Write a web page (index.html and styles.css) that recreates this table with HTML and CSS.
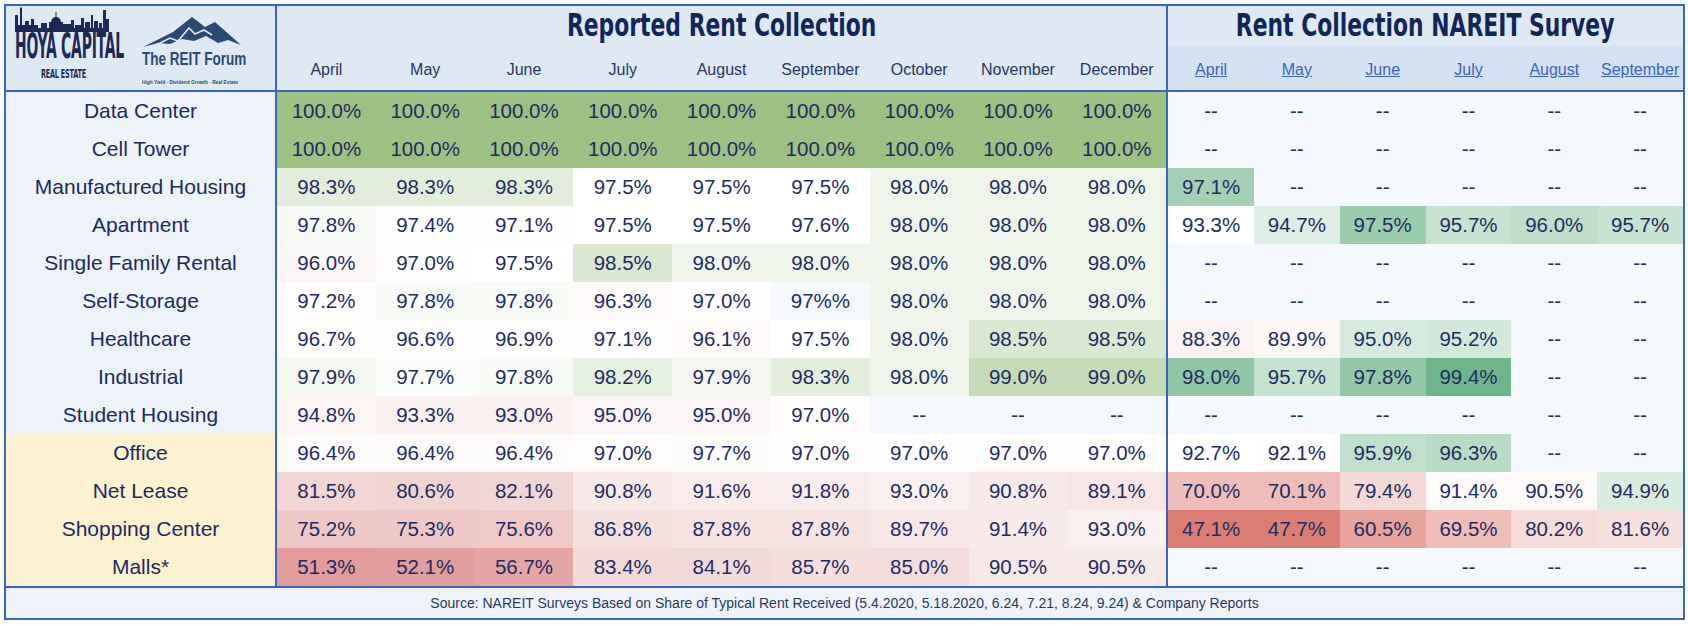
FILE: index.html
```html
<!DOCTYPE html>
<html lang="en">
<head>
<meta charset="utf-8">
<title>Rent Collection</title>
<link rel="stylesheet" href="styles.css">
</head>
<body>
<div class="sheet">
  <div class="grid head">
    <div class="logos">
      <div class="hoya">
        <svg class="skyline" width="94" height="25" viewBox="0 0 94 25">
          <g fill="#1d2955">
            <rect x="0" y="8" width="3" height="17"/>
            <rect x="5" y="1" width="2" height="24"/>
            <rect x="5.5" y="0" width="1" height="2"/>
            <rect x="3" y="18" width="20" height="7"/>
            <rect x="10" y="14" width="4" height="11"/>
            <rect x="16" y="12" width="3" height="13"/>
            <rect x="26" y="16" width="6" height="9"/>
            <rect x="34" y="15" width="14" height="10"/>
            <ellipse cx="41" cy="15" rx="5" ry="5"/>
            <rect x="40.5" y="5" width="1" height="6"/>
            <rect x="48" y="17" width="8" height="8"/>
            <rect x="56" y="13" width="3" height="12"/>
            <rect x="60" y="18" width="6" height="7"/>
            <rect x="66" y="11" width="3" height="14"/>
            <rect x="70" y="15" width="5" height="10"/>
            <rect x="76" y="8" width="2" height="17"/>
            <rect x="79" y="14" width="4" height="11"/>
            <rect x="84" y="16" width="3" height="9"/>
            <rect x="88" y="3" width="3" height="22"/>
            <rect x="91" y="12" width="3" height="13"/>
            <rect x="0" y="21" width="94" height="4"/>
          </g>
        </svg>
        <div class="hoya-name"><span>HOYA CAPITAL</span></div>
        <div class="hoya-sub"><span>REAL ESTATE</span></div>
      </div>
      <div class="forum">
        <svg class="mtn" width="100" height="32" viewBox="0 0 100 32">
          <polygon fill="#2b4a73" points="1,31 31,16 50,1 63,11 73,6 99,29 86,24 76,27 64,20 52,25 40,23 28,28 16,27"/>
          <polyline fill="none" stroke="#dfe9f4" stroke-width="1.6" points="14,29 28,22 36,25 47,12 53,18 62,14 70,19"/>
        </svg>
        <div class="forum-name"><span>The REIT Forum</span></div>
        <div class="forum-tag"><span>High Yield · Dividend Growth · Real Estate</span></div>
      </div>
    </div>
    <div class="title t-rep"><span>Reported Rent Collection</span></div>
    <div class="title t-nar"><span>Rent Collection NAREIT Survey</span></div>
    <div class="mon">April</div>
    <div class="mon">May</div>
    <div class="mon">June</div>
    <div class="mon">July</div>
    <div class="mon">August</div>
    <div class="mon">September</div>
    <div class="mon">October</div>
    <div class="mon">November</div>
    <div class="mon sep">December</div>
    <div class="mon nar"><a href="#">April</a></div>
    <div class="mon nar"><a href="#">May</a></div>
    <div class="mon nar"><a href="#">June</a></div>
    <div class="mon nar"><a href="#">July</a></div>
    <div class="mon nar"><a href="#">August</a></div>
    <div class="mon nar"><a href="#">September</a></div>
  </div>

  <div class="body">
    <div class="grid row">
      <div class="lab">Data Center</div>
      <div style="background:#9dc183">100.0%</div><div style="background:#9dc183">100.0%</div><div style="background:#9dc183">100.0%</div><div style="background:#9dc183">100.0%</div><div style="background:#9dc183">100.0%</div><div style="background:#9dc183">100.0%</div><div style="background:#9dc183">100.0%</div><div style="background:#9dc183">100.0%</div><div style="background:#9dc183">100.0%</div>
      <div>--</div><div>--</div><div>--</div><div>--</div><div>--</div><div>--</div>
    </div>
    <div class="grid row">
      <div class="lab">Cell Tower</div>
      <div style="background:#9dc183">100.0%</div><div style="background:#9dc183">100.0%</div><div style="background:#9dc183">100.0%</div><div style="background:#9dc183">100.0%</div><div style="background:#9dc183">100.0%</div><div style="background:#9dc183">100.0%</div><div style="background:#9dc183">100.0%</div><div style="background:#9dc183">100.0%</div><div style="background:#9dc183">100.0%</div>
      <div>--</div><div>--</div><div>--</div><div>--</div><div>--</div><div>--</div>
    </div>
    <div class="grid row">
      <div class="lab">Manufactured Housing</div>
      <div style="background:#e2eddb">98.3%</div><div style="background:#e2eddb">98.3%</div><div style="background:#e2eddb">98.3%</div><div style="background:#ffffff">97.5%</div><div style="background:#ffffff">97.5%</div><div style="background:#ffffff">97.5%</div><div style="background:#eff5ea">98.0%</div><div style="background:#eff5ea">98.0%</div><div style="background:#eff5ea">98.0%</div>
      <div style="background:#a4d1b6">97.1%</div><div>--</div><div>--</div><div>--</div><div>--</div><div>--</div>
    </div>
    <div class="grid row">
      <div class="lab">Apartment</div>
      <div style="background:#f7faf5">97.8%</div><div style="background:#fffefe">97.4%</div><div style="background:#fefcfc">97.1%</div><div style="background:#ffffff">97.5%</div><div style="background:#ffffff">97.5%</div><div style="background:#ffffff">97.6%</div><div style="background:#eff5ea">98.0%</div><div style="background:#eff5ea">98.0%</div><div style="background:#eff5ea">98.0%</div>
      <div style="background:#ffffff">93.3%</div><div style="background:#ddeee4">94.7%</div><div style="background:#9accae">97.5%</div><div style="background:#c6e2d1">95.7%</div><div style="background:#bedecb">96.0%</div><div style="background:#c6e2d1">95.7%</div>
    </div>
    <div class="grid row">
      <div class="lab">Single Family Rental</div>
      <div style="background:#fdf8f8">96.0%</div><div style="background:#fefcfc">97.0%</div><div style="background:#ffffff">97.5%</div><div style="background:#dae8d1">98.5%</div><div style="background:#eff5ea">98.0%</div><div style="background:#eff5ea">98.0%</div><div style="background:#eff5ea">98.0%</div><div style="background:#eff5ea">98.0%</div><div style="background:#eff5ea">98.0%</div>
      <div>--</div><div>--</div><div>--</div><div>--</div><div>--</div><div>--</div>
    </div>
    <div class="grid row">
      <div class="lab">Self-Storage</div>
      <div style="background:#fffdfd">97.2%</div><div style="background:#f7faf5">97.8%</div><div style="background:#f7faf5">97.8%</div><div style="background:#fdf9f9">96.3%</div><div style="background:#fefcfc">97.0%</div><div>97%%</div><div style="background:#eff5ea">98.0%</div><div style="background:#eff5ea">98.0%</div><div style="background:#eff5ea">98.0%</div>
      <div>--</div><div>--</div><div>--</div><div>--</div><div>--</div><div>--</div>
    </div>
    <div class="grid row">
      <div class="lab">Healthcare</div>
      <div style="background:#fefbfb">96.7%</div><div style="background:#fefbfb">96.6%</div><div style="background:#fefcfc">96.9%</div><div style="background:#fefcfc">97.1%</div><div style="background:#fdf9f9">96.1%</div><div style="background:#ffffff">97.5%</div><div style="background:#eff5ea">98.0%</div><div style="background:#dae8d1">98.5%</div><div style="background:#dae8d1">98.5%</div>
      <div style="background:#fcf2f1">88.3%</div><div style="background:#fdf7f6">89.9%</div><div style="background:#d6eade">95.0%</div><div style="background:#d2e8db">95.2%</div><div>--</div><div>--</div>
    </div>
    <div class="grid row">
      <div class="lab">Industrial</div>
      <div style="background:#f3f7f0">97.9%</div><div style="background:#fbfcfa">97.7%</div><div style="background:#f7faf5">97.8%</div><div style="background:#e6f0e0">98.2%</div><div style="background:#f3f7f0">97.9%</div><div style="background:#e2eddb">98.3%</div><div style="background:#eff5ea">98.0%</div><div style="background:#c6dbb7">99.0%</div><div style="background:#c6dbb7">99.0%</div>
      <div style="background:#8fc6a5">98.0%</div><div style="background:#c6e2d1">95.7%</div><div style="background:#93c8a9">97.8%</div><div style="background:#6db58a">99.4%</div><div>--</div><div>--</div>
    </div>
    <div class="grid row">
      <div class="lab">Student Housing</div>
      <div style="background:#fcf5f4">94.8%</div><div style="background:#faf0f0">93.3%</div><div style="background:#faf0ef">93.0%</div><div style="background:#fcf5f5">95.0%</div><div style="background:#fcf5f5">95.0%</div><div style="background:#fefcfc">97.0%</div><div>--</div><div>--</div><div>--</div>
      <div>--</div><div>--</div><div>--</div><div>--</div><div>--</div><div>--</div>
    </div>
    <div class="grid row">
      <div class="lab yel">Office</div>
      <div style="background:#fdfafa">96.4%</div><div style="background:#fdfafa">96.4%</div><div style="background:#fdfafa">96.4%</div><div style="background:#fefcfc">97.0%</div><div style="background:#fbfcfa">97.7%</div><div style="background:#fefcfc">97.0%</div><div style="background:#fefcfc">97.0%</div><div style="background:#fefcfc">97.0%</div><div style="background:#fefcfc">97.0%</div>
      <div style="background:#ffffff">92.7%</div><div style="background:#fffdfd">92.1%</div><div style="background:#c1dfcd">95.9%</div><div style="background:#b7dbc5">96.3%</div><div>--</div><div>--</div>
    </div>
    <div class="grid row">
      <div class="lab yel">Net Lease</div>
      <div style="background:#f2d5d4">81.5%</div><div style="background:#f1d3d2">80.6%</div><div style="background:#f2d6d5">82.1%</div><div style="background:#f8eae9">90.8%</div><div style="background:#f9eceb">91.6%</div><div style="background:#f9ecec">91.8%</div><div style="background:#faf0ef">93.0%</div><div style="background:#f8eae9">90.8%</div><div style="background:#f7e6e5">89.1%</div>
      <div style="background:#edbeb9">70.0%</div><div style="background:#edbeb9">70.1%</div><div style="background:#f5d9d6">79.4%</div><div style="background:#fefbfb">91.4%</div><div style="background:#fdf9f8">90.5%</div><div style="background:#d9ece0">94.9%</div>
    </div>
    <div class="grid row">
      <div class="lab yel">Shopping Center</div>
      <div style="background:#eec8c7">75.2%</div><div style="background:#eec8c7">75.3%</div><div style="background:#eec9c8">75.6%</div><div style="background:#f5e0e0">86.8%</div><div style="background:#f6e3e2">87.8%</div><div style="background:#f6e3e2">87.8%</div><div style="background:#f7e7e7">89.7%</div><div style="background:#f9ebeb">91.4%</div><div style="background:#faf0ef">93.0%</div>
      <div style="background:#db7d73">47.1%</div><div style="background:#db7f75">47.7%</div><div style="background:#e6a39c">60.5%</div><div style="background:#edbdb8">69.5%</div><div style="background:#f5dbd9">80.2%</div><div style="background:#f6dfdd">81.6%</div>
    </div>
    <div class="grid row">
      <div class="lab yel">Malls*</div>
      <div style="background:#e09d9b">51.3%</div><div style="background:#e09e9c">52.1%</div><div style="background:#e3a6a4">56.7%</div><div style="background:#f3d9d8">83.4%</div><div style="background:#f3dada">84.1%</div><div style="background:#f5dedd">85.7%</div><div style="background:#f4dcdc">85.0%</div><div style="background:#f8e9e9">90.5%</div><div style="background:#f8e9e9">90.5%</div>
      <div>--</div><div>--</div><div>--</div><div>--</div><div>--</div><div>--</div>
    </div>
  </div>

  <div class="foot">Source: NAREIT Surveys Based on Share of Typical Rent Received (5.4.2020, 5.18.2020, 6.24, 7.21, 8.24, 9.24) &amp; Company Reports</div>
</div>
</body>
</html>
```

FILE: styles.css
```css
* {
  box-sizing: border-box;
}

body {
  margin: 0;
  background: #ffffff;
  font-family: "Liberation Sans", Arial, sans-serif;
}

.sheet {
  margin: 4px 0 0 4px;
  width: 1681px;
  border: 2px solid #3a62c7;
  background: #f5f9fd;
}

.grid {
  display: grid;
  grid-template-columns: 271px repeat(8, 98.8px) 100.8px repeat(6, 1fr);
}

/* header */
.head {
  grid-template-rows: 40px 44px;
  background: #dfe9f4;
  border-bottom: 2px solid #3a62c7;
}

.logos {
  grid-row: 1 / 3;
  grid-column: 1;
  border-right: 2px solid #3a62c7;
  display: flex;
  align-items: flex-start;
  padding: 0 0 0 9px;
}

.hoya {
  width: 96px;
  flex: none;
  display: flex;
  flex-direction: column;
  align-items: flex-start;
}

.skyline {
  display: block;
  margin-top: 1px;
}

.hoya-name {
  margin-top: -7px;
  white-space: nowrap;
}

.hoya-name span {
  display: inline-block;
  vertical-align: top;
  font-family: "DejaVu Sans Condensed", "Liberation Sans", sans-serif;
  font-stretch: condensed;
  font-weight: 700;
  font-size: 36px;
  line-height: normal;
  color: #1d2955;
  transform: scaleX(0.43);
  transform-origin: 0 50%;
  letter-spacing: -0.5px;
}

.hoya-sub {
  padding-left: 26px;
  white-space: nowrap;
}

.hoya-sub span {
  display: inline-block;
  vertical-align: top;
  font-family: "DejaVu Sans Condensed", "Liberation Sans", sans-serif;
  font-stretch: condensed;
  font-weight: 700;
  font-size: 13px;
  line-height: normal;
  color: #1d2955;
  transform: scaleX(0.55);
  transform-origin: 0 50%;
  letter-spacing: -0.3px;
}

.forum {
  margin-left: 31px;
  margin-top: 10px;
  width: 104px;
  display: flex;
  flex-direction: column;
  align-items: flex-start;
}

.mtn {
  display: block;
}

.forum-name {
  height: 20px;
  margin-top: 1px;
  white-space: nowrap;
}

.forum-name span {
  display: inline-block;
  font-family: "Liberation Sans", Arial, sans-serif;
  font-weight: 700;
  font-size: 18px;
  line-height: 20px;
  color: #2b4a73;
  transform: scaleX(0.75);
  transform-origin: 0 50%;
}

.forum-tag {
  height: 8px;
  margin-top: 2px;
  white-space: nowrap;
}

.forum-tag span {
  display: inline-block;
  font-family: "Liberation Sans", Arial, sans-serif;
  font-weight: 700;
  font-size: 8px;
  line-height: 8px;
  color: #2b4a73;
  transform: scale(0.6, 0.7);
  transform-origin: 0 50%;
}

.title {
  grid-row: 1;
  display: flex;
  align-items: center;
  justify-content: center;
  padding-bottom: 2px;
  white-space: nowrap;
}

.title span {
  display: inline-block;
  font-family: "DejaVu Sans Condensed", "Liberation Sans", sans-serif;
  font-stretch: condensed;
  font-weight: 700;
  font-size: 32px;
  line-height: 36px;
  color: #102659;
  transform: scaleX(0.76);
}

.t-rep {
  grid-column: 2 / 11;
  border-right: 2px solid #3a62c7;
}

.t-nar {
  grid-column: 11 / 17;
}

.mon {
  grid-row: 2;
  display: flex;
  align-items: center;
  justify-content: center;
  padding-top: 4px;
  font-size: 16px;
  color: #26365f;
  white-space: nowrap;
}

.mon.sep {
  border-right: 2px solid #3a62c7;
}

.mon.nar {
  background: #d4e2f1;
}

.mon a {
  color: #3a63c4;
  text-decoration: underline;
}

/* body rows */
.row {
  height: 38px;
}

.row > div {
  display: flex;
  align-items: center;
  justify-content: center;
  font-size: 20.5px;
  color: #1e2c62;
  white-space: nowrap;
}

.row > div:nth-child(10) {
  border-right: 2px solid #3a62c7;
}

.row > .lab {
  background: #eef3fa;
  border-right: 2px solid #3a62c7;
  color: #1b2a5e;
  font-size: 21px;
}

.row > .lab.yel {
  background: #fdf2d0;
}

/* footer */
.foot {
  height: 32px;
  border-top: 2px solid #3a62c7;
  background: #f0f4fa;
  display: flex;
  align-items: center;
  justify-content: center;
  font-size: 14px;
  color: #2a3860;
}
```
